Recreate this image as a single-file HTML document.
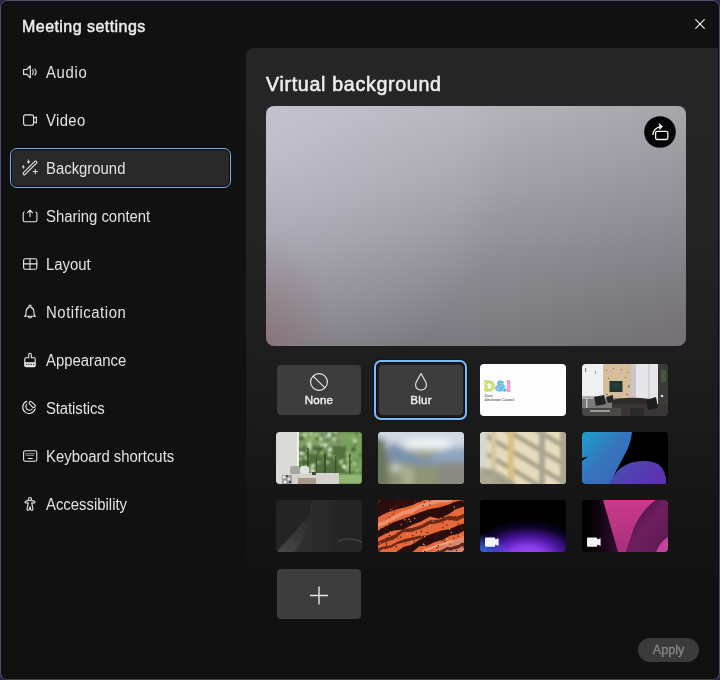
<!DOCTYPE html>
<html><head><meta charset="utf-8">
<style>
*{box-sizing:border-box;margin:0;padding:0}
html,body{width:720px;height:680px;overflow:hidden;background:#2a2458;font-family:"Liberation Sans",sans-serif}
#dlg{position:absolute;left:0;top:0;width:720px;height:680px;border-radius:7px;background:#111111;overflow:hidden}
#frame{position:absolute;left:0;top:0;width:720px;height:680px;border:1px solid #545262;border-bottom-color:#454548;border-radius:7px;z-index:10;box-shadow:inset 1px 0 0 #0d0c1a,inset -1px 0 0 #0d0c1a,inset 0 1px 0 #0d0c1a}
#topband{position:absolute;left:0;top:0;width:720px;height:4px;background:#0e0d18}
.title{will-change:transform;position:absolute;left:22px;top:17.5px;font-size:16px;line-height:18px;font-weight:normal;-webkit-text-stroke:0.5px #ececec;letter-spacing:0.45px;color:#ececec;white-space:nowrap}
.ico{position:absolute;left:18px;width:24px;height:24px}
.ico *{fill:none;stroke:#e8e8e8;stroke-width:1.1;stroke-linecap:round;stroke-linejoin:round}
.lbl{position:absolute;left:46px;font-size:16px;line-height:17px;color:#e2e2e2;white-space:nowrap;transform-origin:0 0;transform:scaleX(.93)}
.sel{position:absolute;left:10px;top:148px;width:221px;height:40px;border:1px solid #78acdc;border-radius:7px;background:#2a2929;box-shadow:inset 0 0 0 1px #0a0a1a}
#panel{position:absolute;left:246px;top:48px;width:480px;height:530px;border-radius:8px;background:linear-gradient(#262626 0px,#242424 180px,#1b1b1b 360px,#151515 460px,#121212 530px)}
.h2{will-change:transform;position:absolute;left:266px;top:73px;font-size:19.6px;line-height:22px;font-weight:normal;-webkit-text-stroke:0.6px #ececec;letter-spacing:0.7px;color:#ececec;white-space:nowrap}
#preview{position:absolute;left:266px;top:106px;width:420px;height:240px;border-radius:8px;overflow:hidden;
 background:radial-gradient(ellipse 70px 110px at 0% 100%,rgba(140,100,108,.5),rgba(140,100,108,0)),radial-gradient(ellipse 60px 50px at 100% 100%,rgba(130,110,115,.3),rgba(130,110,115,0)),radial-gradient(ellipse 240px 260px at 0% 15%,rgba(212,208,228,.5),rgba(212,208,228,0)),linear-gradient(90deg,rgba(0,0,0,0) 0%,rgba(0,0,0,0) 45%,rgba(0,0,0,.09) 100%),linear-gradient(180deg,#b8b5bd 0%,#a4a2a9 35%,#8d8b92 70%,#7b7a80 100%)}
.reset{position:absolute;left:644px;top:116px;width:32px;height:32px}
.tile{position:absolute;width:86px;height:52px;border-radius:4px;overflow:hidden}
.tile svg{display:block}
.btn{position:absolute;width:84px;height:50px;border-radius:4px;background:#3d3d3d;color:#ececec;font-weight:normal;-webkit-text-stroke:.45px #ececec;letter-spacing:.2px;font-size:11.6px;text-align:center}
.btn span{will-change:transform;position:absolute;left:0;right:0;top:28px;line-height:13px}
.btn svg{position:absolute;left:0;top:0}
.ring{position:absolute;left:374px;top:360px;width:93px;height:60px;border:2px solid #7cbcf6;border-radius:7px;box-shadow:inset 0 0 0 1px #0c0e1c,0 0 0 .6px #0c0e1c}
.apply{will-change:transform;position:absolute;left:638px;top:638px;width:61px;height:24px;border-radius:12px;background:#3b3b3b;color:#888888;-webkit-text-stroke:.3px #888888;font-size:12.6px;text-align:center;line-height:24px}
</style></head><body>
<div id="dlg">
<div id="topband"></div>
<div class="title">Meeting settings</div>
<svg style="position:absolute;left:692px;top:16px" width="16" height="16" viewBox="0 0 16 16"><path d="M3.7 3.7L12.3 12.3M12.3 3.7L3.7 12.3" stroke="#f2f2f2" stroke-width="1.15" stroke-linecap="round"/></svg>

<div class="sel"></div>
<!-- Audio -->
<svg class="ico" style="top:60px" viewBox="0 0 24 24"><path d="M5.6 9.5H8.9L12.3 5.9V17.9L8.9 14.4H5.6Z"/><path d="M14.7 9.8Q16.1 12 14.7 14.4"/><path d="M16.9 9Q19.4 12 16.9 15.1"/></svg>
<div class="lbl" style="top:64px;letter-spacing:.7px">Audio</div>
<!-- Video -->
<svg class="ico" style="top:108px" viewBox="0 0 24 24"><rect x="5.6" y="6.9" width="10" height="10.3" rx="2"/><path d="M15.6 10.2L18.4 8.9V14.9L15.6 13.7"/></svg>
<div class="lbl" style="top:112px;letter-spacing:.4px">Video</div>
<!-- Background -->
<svg class="ico" style="top:156px" viewBox="0 0 24 24"><rect x="2.8" y="10.7" width="18.4" height="2.4" rx="1.2" transform="rotate(-45 12 11.9)"/><path d="M10.5 3.9Q10.8 5.5 11.9 5.8Q10.8 6.1 10.5 7.7Q10.2 6.1 9.1 5.8Q10.2 5.5 10.5 3.9Z" style="fill:#f0f0f0;stroke-width:.4"/><path d="M5.3 9.4Q5.6 10.7 6.5 11Q5.6 11.3 5.3 12.6Q5 11.3 4.1 11Q5 10.7 5.3 9.4Z" style="fill:#f0f0f0;stroke-width:.4"/><path d="M15.2 15.6H19.4M17.3 13.6V17.8" style="stroke-width:1"/></svg>
<div class="lbl" style="top:160px">Background</div>
<!-- Sharing -->
<svg class="ico" style="top:204px" viewBox="0 0 24 24"><path d="M6.2 8Q5.2 8.3 5.2 9.5V16.3Q5.2 17.8 6.7 17.8H17.4Q18.9 17.8 18.9 16.3V9.5Q18.9 8.3 17.8 8"/><path d="M12 12.7V6.5M9.5 8.6L12 6.2L14.5 8.6"/></svg>
<div class="lbl" style="top:208px">Sharing content</div>
<!-- Layout -->
<svg class="ico" style="top:252px" viewBox="0 0 24 24"><rect x="5.6" y="6.8" width="13.2" height="10.4" rx="1.8"/><path d="M12 6.8V17.2M5.6 11.9H18.8"/></svg>
<div class="lbl" style="top:256px">Layout</div>
<!-- Notification -->
<svg class="ico" style="top:300px" viewBox="0 0 24 24"><circle cx="12" cy="6.1" r="1.15"/><path d="M10.6 7.6Q8.3 8.3 8.1 11.5L7.9 14.6L6.5 16.3H17.5L16.1 14.6L15.9 11.5Q15.7 8.3 13.4 7.6"/><path d="M10.5 16.5A1.5 1.5 0 0 0 13.5 16.5"/></svg>
<div class="lbl" style="top:304px;letter-spacing:.6px">Notification</div>
<!-- Appearance -->
<svg class="ico" style="top:348px" viewBox="0 0 24 24"><path d="M10.7 9.8V7Q10.7 5.3 12 5.3Q13.3 5.3 13.3 7V9.8H16.1Q17.2 9.8 17.2 10.9V17.5Q17.2 18.6 16.1 18.6H7.9Q6.8 18.6 6.8 17.5V10.9Q6.8 9.8 7.9 9.8Z"/><path d="M7 14.6H17V17.6Q17 18.4 16.2 18.4H7.8Q7 18.4 7 17.6Z" style="fill:#e8e8e8;stroke-width:.6"/><circle cx="8.7" cy="16.4" r=".65" style="fill:#111;stroke:none"/><circle cx="11" cy="16.4" r=".65" style="fill:#111;stroke:none"/><circle cx="13.3" cy="16.4" r=".65" style="fill:#111;stroke:none"/><circle cx="15.6" cy="16.4" r=".65" style="fill:#111;stroke:none"/></svg>
<div class="lbl" style="top:352px">Appearance</div>
<!-- Statistics -->
<svg class="ico" style="top:396px" viewBox="0 0 24 24"><path d="M8.7 5.3A6.3 6.3 0 1 0 17.1 12.9"/><path d="M8.8 8.1A3.4 3.4 0 1 0 14.3 13"/><path d="M11.3 6.2Q12.2 4.8 13.6 5.9L16.8 8.9Q17.8 10.3 16.5 11.2Q15.3 11.9 14.3 10.8L11.5 7.9Q10.8 7.1 11.3 6.2Z"/></svg>
<div class="lbl" style="top:400px;letter-spacing:-.1px">Statistics</div>
<!-- Keyboard -->
<svg class="ico" style="top:444px" viewBox="0 0 24 24"><rect x="5.6" y="6.8" width="13.2" height="10.4" rx="1.8"/><path d="M7.6 9.7H16.4" style="stroke-width:.7;opacity:.8"/><path d="M8.3 11.4H15.7" style="stroke-width:.7;opacity:.8"/><path d="M10.2 14.5H14.2" style="stroke-width:1.1"/></svg>
<div class="lbl" style="top:448px">Keyboard shortcuts</div>
<!-- Accessibility -->
<svg class="ico" style="top:492px" viewBox="0 0 24 24"><circle cx="12" cy="7.1" r="1.55"/><path d="M10.2 8.6Q8.5 8.8 7.7 9.2Q6.3 10.2 7.7 11L10.3 10.9L9.1 16.6Q8.9 18.6 10.4 18.3Q11.2 18.1 11.4 17.2L12 14.5L12.6 17.2Q12.8 18.1 13.6 18.3Q15.1 18.6 14.9 16.6L13.7 10.9L16.3 11Q17.7 10.2 16.3 9.2Q15.5 9 13.8 8.6"/></svg>
<div class="lbl" style="top:496px">Accessibility</div>

<div id="panel"></div>
<div class="h2">Virtual background</div>
<div id="preview"></div>
<svg class="reset" viewBox="0 0 32 32"><circle cx="16" cy="16" r="15.8" fill="#050505"/><rect x="11.6" y="15.3" width="12.2" height="8.2" rx="1.4" fill="none" stroke="#f4f4f4" stroke-width="1.3"/><path d="M9 18.4Q9.4 12.6 15.8 10.8" fill="none" stroke="#f4f4f4" stroke-width="1.4" stroke-linecap="round"/><path d="M15.2 7.6L18.6 10.4L15.8 13.6Z" fill="#f4f4f4" stroke="#f4f4f4" stroke-width=".6" stroke-linejoin="round"/></svg>

<div class="btn" style="left:277px;top:365px"><svg width="84" height="50" viewBox="0 0 84 50"><circle cx="42" cy="17" r="8.4" fill="none" stroke="#eeeeee" stroke-width="1.1"/><path d="M36.1 11.1L47.9 22.9" stroke="#eeeeee" stroke-width="1.1"/></svg><span>None</span></div>
<div class="ring"></div>
<div class="btn" style="left:379px;top:365px"><svg width="84" height="50" viewBox="0 0 84 50"><path d="M42 8.6L46.6 16.8Q48 19.4 47.2 21.6Q46 25 42 25Q38 25 36.8 21.6Q36 19.4 37.4 16.8Z" fill="none" stroke="#eeeeee" stroke-width="1.1" stroke-linejoin="round"/></svg><span>Blur</span></div>

<!--TILES-->
<div class="tile" style="left:480px;top:364px;background:#fdfdfd"><svg width="86" height="52" viewBox="0 0 86 52">
 <g font-family="Liberation Sans" font-weight="bold" font-size="15">
 <text x="4" y="27" fill="#e8f0b0" stroke="#b8d040" stroke-width="1.3" stroke-dasharray="1.2 .6">D</text>
 <text x="15" y="27" fill="#c0e8f0" stroke="#40a8d8" stroke-width="1.3" stroke-dasharray="1.2 .6">&amp;</text>
 <text x="26.5" y="27" fill="#f8d0e8" stroke="#e070b8" stroke-width="1.3" stroke-dasharray="1.2 .6">I</text>
 </g>
 <g font-family="Liberation Sans" font-size="3.6" fill="#222"><text x="4.5" y="32.5">Divrs</text><text x="4.5" y="36.6">&amp;Inclusion Council</text></g>
</svg></div>
<div class="tile" style="left:582px;top:364px;background:#2e2c2a"><svg width="86" height="52" viewBox="0 0 86 52">
 <defs><filter id="b1" x="-10%" y="-10%" width="120%" height="120%"><feGaussianBlur stdDeviation=".45"/></filter></defs>
 <g filter="url(#b1)">
 <rect x="-1" y="-1" width="23" height="38" fill="#eef0f2"/>
 <rect x="3" y="4" width="1.2" height="4" fill="#888"/><rect x="13" y="7" width="1" height="3" fill="#999"/>
 <rect x="21" y="-1" width="28" height="39" fill="#d6be9c"/>
 <g fill="#8a6a50"><rect x="24" y="6" width="1" height="1"/><rect x="31" y="4" width="1" height="1"/><rect x="39" y="5" width="1" height="1"/><rect x="45" y="8" width="1" height="1"/><rect x="26" y="14" width="1" height="1"/><rect x="43" y="13" width="1" height="1"/><rect x="46" y="21" width="1.4" height="2.5"/><rect x="24" y="30" width="2" height="1"/><rect x="44" y="30" width="2" height="1"/></g>
 <rect x="27.5" y="17" width="13" height="11" fill="#1c3434"/>
 <rect x="31" y="19.5" width="6" height="6" fill="#2c3a30"/>
 <rect x="49" y="-1" width="28" height="44" fill="#e6e6e8"/>
 <rect x="49" y="-1" width="5" height="44" fill="#c8c8cc"/><rect x="66" y="-1" width="2" height="44" fill="#d2d2d6"/>
 <rect x="76" y="-1" width="11" height="54" fill="#3a3a38"/>
 <rect x="79" y="6" width="5" height="12" fill="#4a5a3a"/><circle cx="80" cy="32" r="1.3" fill="#ddd"/>
 <rect x="-1" y="34" width="40" height="19" fill="#7a7a78"/>
 <rect x="-1" y="32" width="30" height="3" fill="#b0b0ae"/>
 <rect x="4" y="34" width="1.4" height="14" fill="#c8c8c6"/>
 <path d="M12 33L22 31L24 40L14 42Z" fill="#242424"/><path d="M24 33L31 31L31 38L26 39Z" fill="#262626"/>
 <path d="M30 36Q46 32 68 35L70 40H30Z" fill="#2e2a28"/>
 <rect x="30" y="40" width="57" height="13" fill="#3a3634"/>
 <rect x="-1" y="44" width="40" height="9" fill="#4a4846"/>
 <path d="M64 36L74 33L76 44L66 46Z" fill="#1e1e1e"/>
 <rect x="48" y="44" width="14" height="8" fill="#2a2a2a"/>
 <rect x="8" y="46" width="20" height="2" fill="#9a9a98"/>
 </g>
</svg></div>
<div class="tile" style="left:276px;top:432px;background:#587a44"><svg width="86" height="52" viewBox="0 0 86 52"><defs><filter id="b2" x="-10%" y="-10%" width="120%" height="120%"><feGaussianBlur stdDeviation=".8"/></filter><filter id="b2s" x="-20%" y="-20%" width="140%" height="140%"><feGaussianBlur stdDeviation=".75"/></filter><filter id="b2w"><feGaussianBlur stdDeviation="2"/></filter></defs><rect x="22" y="0" width="64" height="52" fill="#52703e"/><g filter="url(#b2)"><rect x="22" y="0" width="64" height="14" fill="#7e9c66"/><rect x="70" y="0" width="16" height="40" fill="#7aa060"/><circle cx="37.2" cy="17.1" r="1.6" fill="#4a6a38"/><circle cx="59.2" cy="26.6" r="1.4" fill="#98b870"/><circle cx="37.0" cy="33.7" r="1.9" fill="#e8f0e0"/><circle cx="47.4" cy="24.4" r="0.8" fill="#98b870"/><circle cx="47.0" cy="0.6" r="0.9" fill="#98b870"/><circle cx="24.7" cy="32.7" r="1.0" fill="#98b870"/><circle cx="68.0" cy="34.6" r="2.1" fill="#e8f0e0"/><circle cx="68.6" cy="26.1" r="0.8" fill="#88a860"/><circle cx="28.2" cy="3.8" r="2.1" fill="#e8f0e0"/><circle cx="71.9" cy="28.0" r="1.9" fill="#98b870"/><circle cx="44.5" cy="21.3" r="2.0" fill="#4a6a38"/><circle cx="80.6" cy="0.8" r="1.6" fill="#4a6a38"/><circle cx="32.4" cy="38.9" r="2.0" fill="#98b870"/><circle cx="28.7" cy="24.6" r="2.2" fill="#88a860"/><circle cx="40.2" cy="2.7" r="2.2" fill="#a8c880"/><circle cx="44.0" cy="2.9" r="0.6" fill="#e8f0e0"/><circle cx="71.2" cy="21.0" r="1.6" fill="#a8c880"/><circle cx="46.2" cy="20.9" r="2.1" fill="#88a860"/><circle cx="54.3" cy="30.1" r="0.7" fill="#98b870"/><circle cx="56.3" cy="43.0" r="1.1" fill="#88a860"/><circle cx="32.0" cy="1.8" r="1.1" fill="#c8dcb0"/><circle cx="79.4" cy="12.7" r="1.4" fill="#4a6a38"/><circle cx="77.5" cy="17.3" r="2.2" fill="#3e5a30"/><circle cx="54.4" cy="17.1" r="1.0" fill="#88a860"/><circle cx="50.0" cy="7.7" r="1.1" fill="#3e5a30"/><circle cx="48.6" cy="13.6" r="1.6" fill="#4a6a38"/><circle cx="30.5" cy="19.4" r="1.2" fill="#88a860"/><circle cx="61.0" cy="9.6" r="1.5" fill="#4a6a38"/><circle cx="23.4" cy="13.8" r="1.1" fill="#98b870"/><circle cx="42.5" cy="11.0" r="1.2" fill="#98b870"/><circle cx="38.9" cy="20.0" r="1.9" fill="#98b870"/><circle cx="65.8" cy="4.5" r="1.6" fill="#88a860"/><circle cx="37.3" cy="6.2" r="1.7" fill="#a8c880"/><circle cx="60.4" cy="36.6" r="1.0" fill="#3e5a30"/><circle cx="76.8" cy="5.2" r="1.6" fill="#98b870"/><circle cx="50.9" cy="5.8" r="1.4" fill="#c8dcb0"/><circle cx="42.2" cy="30.3" r="2.0" fill="#88a860"/><circle cx="73.7" cy="26.7" r="1.2" fill="#c8dcb0"/><circle cx="49.0" cy="22.1" r="1.3" fill="#4a6a38"/><circle cx="48.7" cy="13.6" r="2.1" fill="#c8dcb0"/><circle cx="34.8" cy="20.1" r="1.6" fill="#98b870"/><circle cx="49.8" cy="42.1" r="1.0" fill="#4a6a38"/><circle cx="51.2" cy="30.3" r="2.1" fill="#98b870"/><circle cx="43.8" cy="5.6" r="1.5" fill="#88a860"/><circle cx="29.7" cy="5.8" r="1.9" fill="#98b870"/><circle cx="81.1" cy="39.2" r="1.5" fill="#a8c880"/><circle cx="52.8" cy="4.2" r="1.0" fill="#a8c880"/><circle cx="55.6" cy="18.5" r="1.6" fill="#88a860"/><circle cx="30.0" cy="34.4" r="1.9" fill="#a8c880"/><circle cx="44.5" cy="7.0" r="1.9" fill="#c8dcb0"/><circle cx="37.3" cy="11.9" r="0.8" fill="#a8c880"/><circle cx="53.2" cy="18.4" r="1.8" fill="#c8dcb0"/><circle cx="39.2" cy="17.3" r="1.4" fill="#3e5a30"/><circle cx="74.4" cy="35.0" r="0.7" fill="#a8c880"/><circle cx="26.4" cy="41.6" r="0.7" fill="#98b870"/><circle cx="53.4" cy="3.9" r="1.2" fill="#e8f0e0"/><circle cx="59.5" cy="9.9" r="1.1" fill="#a8c880"/><circle cx="30.2" cy="0.1" r="1.9" fill="#98b870"/><circle cx="33.4" cy="13.8" r="1.9" fill="#e8f0e0"/><circle cx="62.7" cy="1.9" r="0.7" fill="#4a6a38"/><circle cx="53.8" cy="23.0" r="1.7" fill="#e8f0e0"/><circle cx="23.1" cy="6.4" r="1.5" fill="#3e5a30"/><circle cx="49.2" cy="18.4" r="2.1" fill="#88a860"/><circle cx="84.0" cy="24.1" r="0.8" fill="#4a6a38"/><circle cx="29.9" cy="31.1" r="2.0" fill="#3e5a30"/><circle cx="46.1" cy="3.3" r="1.5" fill="#3e5a30"/><circle cx="59.6" cy="0.1" r="1.8" fill="#a8c880"/><circle cx="55.7" cy="21.5" r="1.2" fill="#3e5a30"/><circle cx="23.5" cy="21.7" r="2.0" fill="#4a6a38"/><circle cx="52.8" cy="20.6" r="1.1" fill="#a8c880"/><circle cx="24.3" cy="26.7" r="1.7" fill="#a8c880"/><circle cx="57.5" cy="3.6" r="1.5" fill="#3e5a30"/><circle cx="58.1" cy="23.7" r="0.9" fill="#c8dcb0"/><circle cx="51.1" cy="31.3" r="1.0" fill="#98b870"/><circle cx="47.4" cy="11.4" r="0.7" fill="#98b870"/><circle cx="37.1" cy="39.4" r="2.1" fill="#e8f0e0"/><circle cx="66.2" cy="29.1" r="1.4" fill="#e8f0e0"/><circle cx="32.0" cy="17.4" r="0.9" fill="#e8f0e0"/><circle cx="69.9" cy="32.0" r="1.3" fill="#4a6a38"/><circle cx="76.9" cy="5.5" r="0.8" fill="#98b870"/><circle cx="42.2" cy="9.0" r="2.1" fill="#88a860"/><circle cx="65.0" cy="31.4" r="1.5" fill="#88a860"/><circle cx="78.9" cy="9.0" r="1.9" fill="#c8dcb0"/><circle cx="33.0" cy="11.0" r="1.8" fill="#c8dcb0"/><circle cx="48.8" cy="27.3" r="0.9" fill="#98b870"/><circle cx="75.4" cy="29.4" r="1.4" fill="#4a6a38"/><circle cx="26.6" cy="38.9" r="2.0" fill="#a8c880"/><circle cx="51.9" cy="6.5" r="1.7" fill="#4a6a38"/><circle cx="26.4" cy="6.3" r="2.0" fill="#3e5a30"/><circle cx="38.6" cy="7.3" r="2.0" fill="#88a860"/><circle cx="32.9" cy="1.2" r="0.7" fill="#3e5a30"/><circle cx="27.5" cy="3.9" r="1.1" fill="#88a860"/><circle cx="51.0" cy="22.6" r="0.6" fill="#88a860"/><circle cx="49.9" cy="13.5" r="1.5" fill="#e8f0e0"/><circle cx="47.0" cy="14.0" r="1.0" fill="#4a6a38"/><circle cx="49.7" cy="15.4" r="1.0" fill="#98b870"/><circle cx="82.2" cy="15.3" r="1.8" fill="#88a860"/><circle cx="64.4" cy="30.0" r="1.9" fill="#a8c880"/><circle cx="70.3" cy="37.0" r="1.5" fill="#a8c880"/><circle cx="64.7" cy="12.4" r="1.1" fill="#4a6a38"/><circle cx="58.2" cy="6.9" r="1.6" fill="#c8dcb0"/><circle cx="45.7" cy="30.8" r="0.8" fill="#98b870"/><circle cx="31.0" cy="13.1" r="1.6" fill="#98b870"/><circle cx="41.2" cy="6.4" r="1.9" fill="#4a6a38"/><circle cx="26.4" cy="28.9" r="1.5" fill="#4a6a38"/><circle cx="47.1" cy="2.9" r="0.7" fill="#c8dcb0"/><circle cx="24.7" cy="14.5" r="1.8" fill="#88a860"/><circle cx="78.0" cy="31.5" r="1.9" fill="#a8c880"/><circle cx="44.6" cy="21.7" r="1.0" fill="#a8c880"/><circle cx="65.6" cy="24.8" r="0.8" fill="#4a6a38"/><circle cx="34.1" cy="16.7" r="1.9" fill="#4a6a38"/><circle cx="30.2" cy="26.0" r="1.9" fill="#98b870"/><circle cx="55.8" cy="15.7" r="1.0" fill="#3e5a30"/><circle cx="40.8" cy="28.0" r="1.3" fill="#3e5a30"/><circle cx="46.5" cy="20.1" r="1.6" fill="#98b870"/><circle cx="65.9" cy="12.8" r="1.4" fill="#98b870"/><circle cx="34.2" cy="16.2" r="1.8" fill="#c8dcb0"/><circle cx="53.5" cy="17.6" r="0.9" fill="#98b870"/><circle cx="35.6" cy="36.0" r="2.1" fill="#a8c880"/><circle cx="58.2" cy="41.7" r="0.8" fill="#3e5a30"/><circle cx="27.7" cy="21.8" r="1.6" fill="#98b870"/><circle cx="27.0" cy="23.9" r="1.1" fill="#3e5a30"/><circle cx="44.0" cy="17.2" r="1.9" fill="#3e5a30"/><circle cx="81.3" cy="28.6" r="1.1" fill="#3e5a30"/><circle cx="35.1" cy="1.7" r="1.7" fill="#c8dcb0"/><circle cx="53.0" cy="2.6" r="0.7" fill="#c8dcb0"/><circle cx="67.2" cy="13.3" r="0.7" fill="#3e5a30"/><circle cx="49.0" cy="19.5" r="1.3" fill="#3e5a30"/><circle cx="66.2" cy="14.7" r="0.7" fill="#88a860"/><circle cx="45.5" cy="13.0" r="1.6" fill="#c8dcb0"/><circle cx="84.1" cy="23.3" r="1.2" fill="#3e5a30"/><circle cx="51.4" cy="5.4" r="0.9" fill="#e8f0e0"/><circle cx="54.2" cy="16.7" r="1.6" fill="#e8f0e0"/><circle cx="53.4" cy="1.4" r="1.3" fill="#e8f0e0"/><circle cx="24.1" cy="20.4" r="0.7" fill="#e8f0e0"/><circle cx="23.7" cy="27.1" r="0.8" fill="#e8f0e0"/><circle cx="34.2" cy="8.5" r="2.1" fill="#98b870"/><circle cx="25.3" cy="21.3" r="1.9" fill="#e8f0e0"/><circle cx="72.5" cy="32.9" r="1.5" fill="#a8c880"/><circle cx="74.1" cy="19.5" r="0.7" fill="#4a6a38"/><rect x="62" y="42" width="24" height="10" fill="#92b874"/></g><g fill="#34422a" opacity=".75" filter="url(#b2s)"><rect x="31" y="16" width="1.6" height="26"/><rect x="48" y="22" width="2" height="20"/><rect x="59" y="24" width="1.4" height="18"/><rect x="73" y="22" width="1.6" height="20"/><rect x="40" y="26" width="1" height="16"/></g><g filter="url(#b2s)"><rect x="0" y="0" width="21" height="52" fill="#dadad6"/><rect x="21" y="0" width="2" height="36" fill="#eeeeec"/></g><g filter="url(#b2s)"><rect x="13" y="41" width="50" height="11" fill="#d4d2cc"/><rect x="14" y="34" width="10" height="8" rx="2.5" fill="#a6a6a2"/><rect x="24" y="34" width="9" height="8" rx="2.5" fill="#e2e2e0"/><rect x="22" y="46" width="18" height="6" fill="#a89888"/><rect x="36" y="40" width="4" height="3" fill="#3a4a30"/></g><g filter="url(#b2s)"><rect x="6" y="43" width="10" height="9" fill="#9a9a96"/><circle cx="8" cy="45" r="1.5" fill="#e8e8e8"/><circle cx="13" cy="47" r="1.5" fill="#e0e0e0"/><circle cx="9" cy="50" r="1.4" fill="#f0f0f0"/><circle cx="11" cy="44" r="1" fill="#333"/><circle cx="14" cy="50" r="1" fill="#333"/></g></svg></div>
<div class="tile" style="left:378px;top:432px;background:#9ea294"><svg width="86" height="52" viewBox="0 0 86 52"><defs><filter id="b3" x="-30%" y="-30%" width="160%" height="160%"><feGaussianBlur stdDeviation="3.2"/></filter></defs><rect width="86" height="52" fill="#9a9e8e"/><g filter="url(#b3)"><rect x="-8" y="-8" width="102" height="26" fill="#d0d8e2"/><ellipse cx="50" cy="12" rx="24" ry="6" fill="#eef0f4"/><path d="M8 34L12 10L22 14L34 22L46 28L58 22L94 14V36H8Z" fill="#7890ae"/><path d="M54 22L72 16L94 14V30H54Z" fill="#8ea6c0"/><path d="M-8 34Q10 26 30 32Q50 36 70 30L94 32V60H-8Z" fill="#8e9476"/><path d="M-6 4L8 8L12 60H-6Z" fill="#6a765c"/><ellipse cx="30" cy="44" rx="6" ry="10" fill="#acb092"/><rect x="60" y="30" width="34" height="30" fill="#8a8a82"/><ellipse cx="18" cy="36" rx="6" ry="4" fill="#c8ccc0"/></g></svg></div>
<div class="tile" style="left:480px;top:432px;background:#e4dabc"><svg width="86" height="52" viewBox="0 0 86 52"><defs><filter id="b4" x="-20%" y="-20%" width="140%" height="140%"><feGaussianBlur stdDeviation="1.8"/></filter></defs><rect width="86" height="52" fill="#e6dcbc"/><g filter="url(#b4)"><g fill="#aaa28c"><path d="M-10 -44.6L96 19.0V24.5L-10 -39.1Z"/><path d="M-10 -26.6L96 37.0V42.5L-10 -21.1Z"/><path d="M-10 -8.6L96 55.0V60.5L-10 -3.1Z"/><path d="M-10 9.4L96 73.0V78.5L-10 14.9Z"/><path d="M-10 27.4L96 91.0V96.5L-10 32.9Z"/></g><rect x="11" y="-4" width="5" height="60" fill="#d2c8a4"/><rect x="28" y="-4" width="6" height="60" fill="#d8c080"/><rect x="59" y="-4" width="6" height="60" fill="#aaa494"/><rect x="-4" y="-4" width="11" height="44" fill="#d4d8d0"/><path d="M-4 36Q16 32 40 56H-4Z" fill="#9e9e8a" opacity=".8"/><rect x="80" y="-4" width="10" height="60" fill="#aca696"/></g></svg></div>
<div class="tile" style="left:582px;top:432px;background:#000"><svg width="86" height="52" viewBox="0 0 86 52">
 <defs><linearGradient id="g5" x1="0" y1="0" x2="1" y2="1"><stop offset="0" stop-color="#1aa0cc"/><stop offset=".45" stop-color="#3676be"/><stop offset="1" stop-color="#3a62b6"/></linearGradient>
 <linearGradient id="g6" x1="0" y1="0" x2="1" y2=".4"><stop offset="0" stop-color="#4850b0"/><stop offset="1" stop-color="#5c32b2"/></linearGradient></defs>
 <path d="M0 0H50Q49 12 42 24Q34 38 28 52H0V29L6 24.5L0 26Z" fill="url(#g5)"/>
 <path d="M28 52Q34 34 52 30Q66 27 76 32Q84 38 84.5 52Z" fill="url(#g6)"/>
</svg></div>
<div class="tile" style="left:276px;top:500px;background:#242424"><svg width="86" height="52" viewBox="0 0 86 52"><defs><linearGradient id="g7" x1="0" y1="0" x2="1" y2="0"><stop offset="0" stop-color="#363636"/><stop offset=".35" stop-color="#303030"/><stop offset="1" stop-color="#262626"/></linearGradient><linearGradient id="g7b" x1="0" y1="1" x2=".7" y2="0"><stop offset="0" stop-color="#4a4a4a"/><stop offset=".5" stop-color="#3a3a3a"/><stop offset="1" stop-color="#2c2c2c"/></linearGradient><filter id="b7" x="-10%" y="-10%" width="120%" height="120%"><feGaussianBlur stdDeviation=".7"/></filter></defs><rect width="86" height="52" fill="#242424"/><g filter="url(#b7)"><path d="M36 -2H60Q58 20 62 38Q64 46 62 54H0Q24 38 33 16Z" fill="url(#g7)"/><path d="M34 12Q22 30 2 50L0 54H16Q30 40 36 14Z" fill="url(#g7b)"/><path d="M60 41Q72 36 88 43V54H58Z" fill="#282828"/><path d="M62 41Q74 36 88 43" stroke="#444" stroke-width="1.4" fill="none"/></g></svg></div>
<div class="tile" style="left:378px;top:500px;background:#e06a40"><svg width="86" height="52" viewBox="0 0 86 52"><defs><filter id="b8"><feGaussianBlur stdDeviation=".4"/></filter></defs><rect width="86" height="52" fill="#e4683a"/><g filter="url(#b8)"><path d="M-1 -1H46Q36 6 20 9Q8 12 -1 18Z" fill="#2a0c08"/><path d="M-2.0 23.9 L7.0 20.7 L16.0 15.7 L25.0 11.1 L34.0 8.6 L43.0 4.0 L52.0 0.9 L61.0 -0.5 L70.0 -2.4 L79.0 -5.5 L88.0 -8.8 L88.0 -6.0 L79.0 -1.4 L70.0 2.6 L61.0 2.4 L52.0 5.5 L43.0 7.5 L34.0 13.2 L25.0 15.0 L16.0 19.8 L7.0 24.6 L-2.0 27.9Z" fill="#f0a080" opacity="0.75"/><path d="M-2.0 32.1 L7.0 26.6 L16.0 21.9 L25.0 18.9 L34.0 15.4 L43.0 12.0 L52.0 8.9 L61.0 7.4 L70.0 4.7 L79.0 1.3 L88.0 -0.5 L88.0 6.1 L79.0 8.8 L70.0 14.5 L61.0 18.7 L52.0 16.5 L43.0 21.6 L34.0 24.9 L25.0 29.4 L16.0 30.5 L7.0 34.1 L-2.0 38.7Z" fill="#2c0e08" opacity="1"/><path d="M-2.0 42.6 L7.0 38.6 L16.0 34.9 L25.0 29.0 L34.0 27.9 L43.0 25.2 L52.0 20.3 L61.0 19.7 L70.0 16.0 L79.0 16.5 L88.0 13.1 L88.0 16.4 L79.0 20.9 L70.0 19.6 L61.0 23.1 L52.0 24.5 L43.0 28.8 L34.0 31.8 L25.0 32.3 L16.0 39.6 L7.0 42.2 L-2.0 46.3Z" fill="#5a1c10" opacity="0.85"/><path d="M-2.0 11.0 L4.2 10.2 L10.4 7.3 L16.6 4.2 L22.8 2.0 L29.0 0.1 L35.2 -1.4 L41.4 -1.1 L47.6 -4.2 L53.8 -5.6 L60.0 -5.1 L60.0 -2.0 L53.8 -2.9 L47.6 -0.6 L41.4 2.3 L35.2 1.1 L29.0 2.9 L22.8 5.2 L16.6 7.5 L10.4 10.1 L4.2 12.6 L-2.0 13.2Z" fill="#3a1008" opacity="0.8"/><path d="M-2.0 49.0 L5.2 46.6 L12.4 45.4 L19.6 41.8 L26.8 39.1 L34.0 37.4 L41.2 35.8 L48.4 35.4 L55.6 32.9 L62.8 30.5 L70.0 31.0 L70.0 34.4 L62.8 32.9 L55.6 36.4 L48.4 38.3 L41.2 38.6 L34.0 40.5 L26.8 42.2 L19.6 44.1 L12.4 48.0 L5.2 49.1 L-2.0 52.8Z" fill="#4a1810" opacity="0.8"/><path d="M10.0 55.4 L17.8 52.3 L25.6 47.0 L33.4 44.8 L41.2 40.1 L49.0 35.9 L56.8 33.3 L64.6 30.5 L72.4 28.7 L80.2 25.3 L88.0 23.0 L88.0 29.6 L80.2 34.1 L72.4 35.6 L64.6 39.7 L56.8 42.0 L49.0 45.7 L41.2 46.2 L33.4 53.1 L25.6 56.7 L17.8 62.0 L10.0 61.8Z" fill="#2a0c08" opacity="1"/><path d="M30.0 58.1 L35.8 55.4 L41.6 53.3 L47.4 48.6 L53.2 47.1 L59.0 44.2 L64.8 43.1 L70.6 40.6 L76.4 40.3 L82.2 37.9 L88.0 35.1 L88.0 37.3 L82.2 41.0 L76.4 43.5 L70.6 44.2 L64.8 45.4 L59.0 46.9 L53.2 49.3 L47.4 51.1 L41.6 55.8 L35.8 57.9 L30.0 61.6Z" fill="#f4a890" opacity="0.8"/><path d="M52 53Q68 44 87 36V53Z" fill="#d88878" opacity=".85"/><path d="M50.0 54.8 L53.8 54.7 L57.6 51.4 L61.4 50.9 L65.2 49.0 L69.0 47.0 L72.8 47.2 L76.6 45.9 L80.4 44.9 L84.2 42.7 L88.0 43.0 L88.0 46.5 L84.2 45.9 L80.4 48.5 L76.6 49.2 L72.8 50.8 L69.0 50.0 L65.2 52.8 L61.4 54.2 L57.6 54.6 L53.8 58.4 L50.0 58.4Z" fill="#3a1208" opacity="0.8"/><circle cx="35.9" cy="41.1" r=".7" fill="#3a1008"/><circle cx="49.3" cy="32.5" r=".7" fill="#3a1008"/><circle cx="32.6" cy="0.6" r=".7" fill="#2a0c08"/><circle cx="6.9" cy="33.2" r=".7" fill="#7a2a18"/><circle cx="75.7" cy="37.9" r=".7" fill="#3a1008"/><circle cx="80.3" cy="36.1" r=".7" fill="#3a1008"/><circle cx="37.9" cy="43.6" r=".7" fill="#2a0c08"/><circle cx="44.6" cy="26.8" r=".7" fill="#7a2a18"/><circle cx="51.7" cy="25.0" r=".7" fill="#f0a080"/><circle cx="82.3" cy="5.9" r=".7" fill="#3a1008"/><circle cx="22.0" cy="0.6" r=".7" fill="#7a2a18"/><circle cx="12.3" cy="31.8" r=".7" fill="#f0a080"/><circle cx="64.8" cy="17.8" r=".7" fill="#3a1008"/><circle cx="42.9" cy="12.6" r=".7" fill="#3a1008"/><circle cx="57.3" cy="10.3" r=".7" fill="#3a1008"/><circle cx="69.1" cy="39.2" r=".7" fill="#f0a080"/><circle cx="75.7" cy="20.0" r=".7" fill="#7a2a18"/><circle cx="18.1" cy="7.0" r=".7" fill="#7a2a18"/><circle cx="72.0" cy="44.1" r=".7" fill="#2a0c08"/><circle cx="81.7" cy="14.4" r=".7" fill="#f0a080"/><circle cx="9.7" cy="24.5" r=".7" fill="#f0a080"/><circle cx="71.5" cy="19.9" r=".7" fill="#3a1008"/><circle cx="57.8" cy="37.2" r=".7" fill="#3a1008"/><circle cx="27.5" cy="43.1" r=".7" fill="#7a2a18"/><circle cx="75.1" cy="2.2" r=".7" fill="#7a2a18"/><circle cx="49.1" cy="16.1" r=".7" fill="#2a0c08"/><circle cx="55.1" cy="21.1" r=".7" fill="#f0a080"/><circle cx="2.1" cy="43.1" r=".7" fill="#f0a080"/><circle cx="67.0" cy="41.4" r=".7" fill="#2a0c08"/><circle cx="38.4" cy="32.8" r=".7" fill="#7a2a18"/><circle cx="82.4" cy="35.6" r=".7" fill="#f0a080"/><circle cx="70.9" cy="13.3" r=".7" fill="#2a0c08"/><circle cx="64.9" cy="27.8" r=".7" fill="#2a0c08"/><circle cx="15.4" cy="14.2" r=".7" fill="#7a2a18"/><circle cx="46.4" cy="49.2" r=".7" fill="#f0a080"/><circle cx="33.8" cy="41.2" r=".7" fill="#f0a080"/><circle cx="7.5" cy="48.5" r=".7" fill="#3a1008"/><circle cx="11.2" cy="23.6" r=".7" fill="#2a0c08"/><circle cx="32.4" cy="29.6" r=".7" fill="#7a2a18"/><circle cx="39.9" cy="33.9" r=".7" fill="#f0a080"/><circle cx="8.5" cy="45.0" r=".7" fill="#2a0c08"/><circle cx="18.3" cy="46.8" r=".7" fill="#2a0c08"/><circle cx="84.1" cy="27.9" r=".7" fill="#7a2a18"/><circle cx="22.5" cy="37.3" r=".7" fill="#2a0c08"/><circle cx="30.0" cy="4.3" r=".7" fill="#3a1008"/><circle cx="29.4" cy="21.9" r=".7" fill="#7a2a18"/><circle cx="41.9" cy="1.5" r=".7" fill="#2a0c08"/><circle cx="36.9" cy="1.8" r=".7" fill="#7a2a18"/><circle cx="59.0" cy="47.6" r=".7" fill="#3a1008"/><circle cx="12.8" cy="26.9" r=".7" fill="#3a1008"/><circle cx="81.3" cy="25.6" r=".7" fill="#2a0c08"/><circle cx="65.2" cy="22.8" r=".7" fill="#7a2a18"/><circle cx="71.5" cy="29.2" r=".7" fill="#f0a080"/><circle cx="45.0" cy="43.9" r=".7" fill="#7a2a18"/><circle cx="26.8" cy="19.8" r=".7" fill="#f0a080"/><circle cx="26.2" cy="7.3" r=".7" fill="#7a2a18"/><circle cx="49.3" cy="10.5" r=".7" fill="#2a0c08"/><circle cx="43.3" cy="31.5" r=".7" fill="#2a0c08"/><circle cx="46.3" cy="2.3" r=".7" fill="#3a1008"/><circle cx="46.8" cy="51.4" r=".7" fill="#2a0c08"/><circle cx="42.2" cy="35.9" r=".7" fill="#2a0c08"/><circle cx="80.1" cy="23.9" r=".7" fill="#3a1008"/><circle cx="23.2" cy="24.6" r=".7" fill="#f0a080"/><circle cx="29.2" cy="46.8" r=".7" fill="#3a1008"/><circle cx="45.1" cy="5.6" r=".7" fill="#3a1008"/><circle cx="53.1" cy="48.1" r=".7" fill="#f0a080"/><circle cx="60.4" cy="50.8" r=".7" fill="#2a0c08"/><circle cx="16.7" cy="11.8" r=".7" fill="#7a2a18"/><circle cx="27.7" cy="18.5" r=".7" fill="#3a1008"/><circle cx="9.0" cy="38.0" r=".7" fill="#2a0c08"/><circle cx="73.3" cy="32.4" r=".7" fill="#f0a080"/><circle cx="60.3" cy="45.7" r=".7" fill="#2a0c08"/><circle cx="32.3" cy="21.5" r=".7" fill="#f0a080"/><circle cx="46.3" cy="44.9" r=".7" fill="#f0a080"/><circle cx="45.5" cy="44.3" r=".7" fill="#f0a080"/><circle cx="20.0" cy="38.5" r=".7" fill="#7a2a18"/><circle cx="77.6" cy="16.4" r=".7" fill="#7a2a18"/><circle cx="76.6" cy="10.1" r=".7" fill="#f0a080"/><circle cx="76.3" cy="7.0" r=".7" fill="#f0a080"/><circle cx="11.4" cy="4.6" r=".7" fill="#3a1008"/><circle cx="8.3" cy="43.3" r=".7" fill="#3a1008"/><circle cx="46.7" cy="36.7" r=".7" fill="#f0a080"/><circle cx="34.6" cy="35.6" r=".7" fill="#2a0c08"/><circle cx="8.3" cy="29.6" r=".7" fill="#7a2a18"/><circle cx="78.4" cy="50.4" r=".7" fill="#2a0c08"/><circle cx="60.6" cy="33.0" r=".7" fill="#7a2a18"/><circle cx="43.2" cy="35.7" r=".7" fill="#f0a080"/><circle cx="69.0" cy="25.1" r=".7" fill="#2a0c08"/><circle cx="3.2" cy="28.7" r=".7" fill="#3a1008"/><circle cx="12.6" cy="9.6" r=".7" fill="#f0a080"/><circle cx="14.8" cy="8.2" r=".7" fill="#7a2a18"/><circle cx="79.7" cy="5.0" r=".7" fill="#2a0c08"/><circle cx="11.6" cy="35.4" r=".7" fill="#2a0c08"/><circle cx="65.8" cy="17.0" r=".7" fill="#3a1008"/><circle cx="36.7" cy="18.4" r=".7" fill="#f0a080"/><circle cx="51.7" cy="0.7" r=".7" fill="#2a0c08"/><circle cx="72.6" cy="9.4" r=".7" fill="#3a1008"/><circle cx="30.9" cy="19.3" r=".7" fill="#f0a080"/><circle cx="52.0" cy="4.9" r=".7" fill="#2a0c08"/><circle cx="27.8" cy="4.4" r=".7" fill="#3a1008"/><circle cx="49.0" cy="9.9" r=".7" fill="#7a2a18"/><circle cx="69.2" cy="13.4" r=".7" fill="#2a0c08"/><circle cx="64.0" cy="40.5" r=".7" fill="#3a1008"/><circle cx="11.5" cy="17.2" r=".7" fill="#7a2a18"/><circle cx="66.0" cy="39.8" r=".7" fill="#3a1008"/><circle cx="17.8" cy="9.6" r=".7" fill="#7a2a18"/><circle cx="25.9" cy="5.2" r=".7" fill="#7a2a18"/><circle cx="85.2" cy="46.9" r=".7" fill="#2a0c08"/><circle cx="20.0" cy="49.1" r=".7" fill="#7a2a18"/><circle cx="29.1" cy="34.3" r=".7" fill="#f0a080"/></g></svg></div>
<div class="tile" style="left:480px;top:500px;background:#000"><svg width="86" height="52" viewBox="0 0 86 52">
 <defs><radialGradient id="g9" cx=".55" cy="1.12" r=".75"><stop offset="0" stop-color="#a050f4"/><stop offset=".3" stop-color="#8a3ce8"/><stop offset=".55" stop-color="#4a16a0"/><stop offset=".8" stop-color="#10042a"/><stop offset="1" stop-color="#000"/></radialGradient>
 <radialGradient id="g10" cx="0" cy="1" r=".35"><stop offset="0" stop-color="#3a6cf0"/><stop offset="1" stop-color="#3a6cf0" stop-opacity="0"/></radialGradient></defs>
 <rect width="86" height="52" fill="url(#g9)"/>
 <rect width="86" height="52" fill="url(#g10)"/>
<path d="M6.3 37.5H14Q15.3 37.5 15.3 38.8V39.6L18.6 38.2V46L15.3 44.6V45.4Q15.3 46.7 14 46.7H6.3Q5 46.7 5 45.4V38.8Q5 37.5 6.3 37.5Z" fill="#f4f4f8"/></svg></div>
<div class="tile" style="left:582px;top:500px;background:#000"><svg width="86" height="52" viewBox="0 0 86 52">
 <defs><linearGradient id="g11" x1="0" y1="0" x2="1" y2="0"><stop offset="0" stop-color="#000"/><stop offset=".2" stop-color="#100410"/><stop offset=".5" stop-color="#401040"/><stop offset="1" stop-color="#501848"/></linearGradient>
 <linearGradient id="g12" x1="0" y1="0" x2="0" y2="1"><stop offset="0" stop-color="#cc3a8c"/><stop offset="1" stop-color="#a8307c"/></linearGradient>
 <linearGradient id="g13" x1="0" y1="0" x2="1" y2="1"><stop offset="0" stop-color="#301040"/><stop offset=".5" stop-color="#6e1e5e"/><stop offset="1" stop-color="#5a1a50"/></linearGradient></defs>
 <rect width="86" height="52" fill="url(#g11)"/>
 <path d="M21 0H74Q60 10 52 28L44 52H36Z" fill="url(#g12)"/>
 <path d="M74 0H86V52H44L52 28Q60 10 74 0Z" fill="url(#g13)"/>
 <path d="M86 37V52H74Q78 42 86 37Z" fill="#c444a0"/>
<path d="M6.3 37.5H14Q15.3 37.5 15.3 38.8V39.6L18.6 38.2V46L15.3 44.6V45.4Q15.3 46.7 14 46.7H6.3Q5 46.7 5 45.4V38.8Q5 37.5 6.3 37.5Z" fill="#f4f4f8"/></svg></div>
<!--/TILES-->
<div class="btn" style="left:277px;top:569px"><svg width="84" height="50" viewBox="0 0 84 50"><path d="M42 17.4V35.6M33 26.5H51" stroke="#e6e6e6" stroke-width="1.4"/></svg></div>
<div class="apply">Apply</div>
</div>
<div id="frame"></div>
</body></html>
